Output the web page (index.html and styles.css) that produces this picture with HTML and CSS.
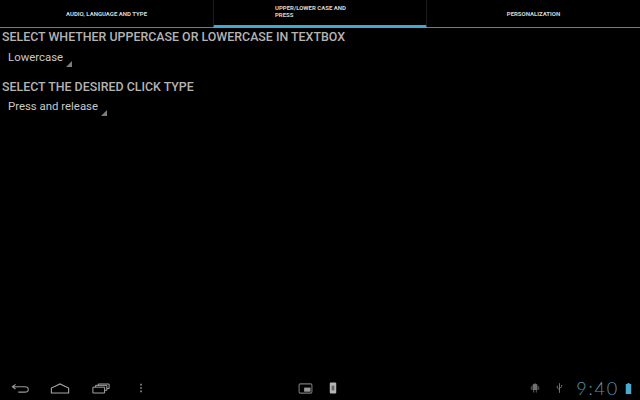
FILE: index.html
```html
<!DOCTYPE html>
<html>
<head>
<meta charset="utf-8">
<title>Settings</title>
<link rel="stylesheet" href="styles.css">
</head>
<body>
<div class="screen">
  <nav class="tabs">
    <div class="tab"><span class="tab-label">AUDIO, LANGUAGE AND TYPE</span></div>
    <div class="tab tab-active"><span class="tab-label tab-label-wrap">UPPER/LOWER CASE AND PRESS</span></div>
    <div class="tab"><span class="tab-label">PERSONALIZATION</span></div>
  </nav>
  <main class="content">
    <h2 class="heading">SELECT WHETHER UPPERCASE OR LOWERCASE IN TEXTBOX</h2>
    <div class="spinner spinner-first">Lowercase<span class="corner"></span></div>
    <h2 class="heading heading-second">SELECT THE DESIRED CLICK TYPE</h2>
    <div class="spinner">Press and release<span class="corner"></span></div>
  </main>
  <footer class="sysbar">
    <div class="nav-icons">
      <svg class="ic ic-back" viewBox="0 0 22 12"><path d="M5 1.500 1.500 4 5 6.500M2 4h13c3 0 4 1.500 4 3s-1 3-4 3H8" fill="none" stroke="#9a9a9a" stroke-width="1.200"/></svg>
      <svg class="ic ic-home" viewBox="0 0 22 12"><path d="M1.500 11V5.500L11 1l9.500 4.500V11Z" fill="none" stroke="#a5a5a5" stroke-width="1.200"/></svg>
      <svg class="ic ic-recent" viewBox="0 0 20 12"><path d="M1 4.500h13V11H1ZM4 4.500V2.500h12.500V8H14M7 2.500V1h12v5h-2.500" fill="none" stroke="#a5a5a5" stroke-width="1.100"/></svg>
      <svg class="ic ic-menu" viewBox="0 0 4 12"><path d="M1 1h2v2H1ZM1 5h2v2H1ZM1 9h2v2H1Z" fill="#8c8c8c"/></svg>
    </div>
    <div class="mid-icons">
      <svg class="ic ic-shot" viewBox="0 0 16 12"><rect x="1" y="1" width="14" height="10" rx="1.500" fill="none" stroke="#777" stroke-width="1.200"/><rect x="6.500" y="5" width="7" height="4.500" fill="#999"/></svg>
      <svg class="ic ic-phone" viewBox="0 0 8 13"><rect x="0.500" y="0.500" width="7" height="12" rx="1" fill="#b5b5b5"/><rect x="2.500" y="4" width="3" height="5" fill="#666"/></svg>
    </div>
    <div class="status">
      <svg class="ic ic-android" viewBox="0 0 12 13"><path d="M3 4a3 3 0 0 1 6 0v5H8v3H7V9H5v3H4V9H3ZM1 4.500h1v4H1ZM10 4.500h1v4h-1Z" fill="#6f6f6f"/></svg>
      <svg class="ic ic-usb" viewBox="0 0 8 13"><path d="M4 1v11M1.500 4v2.500L4 8.500M6.500 3v2L4 7" fill="none" stroke="#808080" stroke-width="1"/></svg>
      <span class="clock">9:40</span>
      <svg class="ic ic-batt" viewBox="0 0 7 12"><path d="M2.500 0h2v1H6.500v11H.5V1h2Z" fill="#4fa9cf"/></svg>
    </div>
  </footer>
</div>
</body>
</html>
```
FILE: styles.css
```css
* { box-sizing: border-box; }
html, body { margin: 0; padding: 0; background: #000; }
.screen {
  width: 640px; height: 400px; overflow: hidden;
  display: flex; flex-direction: column;
  background: #000;
  font-family: "Roboto", "Liberation Sans", sans-serif;
}
.tabs {
  flex: none; height: 28px;
  display: grid; grid-template-columns: 213px 214px 213px;
  border-bottom: 1px solid #6f7f86;
}
.tab {
  display: flex; align-items: center; justify-content: center;
  height: 27px; padding-bottom: 1px;
}
.tab-active {
  border-left: 1px solid #1c1c1c; border-right: 1px solid #1c1c1c;
  border-bottom: 3px solid #3fa9cf;
  height: 28px;
  justify-content: flex-start; padding: 0 0 3px 61px;
}
.tab-label {
  font-size: 6px; font-weight: 700; color: #d6d6d6; line-height: 7px;
}
.tab-label-wrap { width: 90px; }
.content { flex: 1; padding: 2px 2px 0; }
.heading {
  margin: 0; font-size: 12.4px; font-weight: 500; line-height: 14px;
  color: #b4b4b4; white-space: nowrap;
}
.heading-second { margin-top: 16px; }
.spinner {
  position: relative; display: block; width: fit-content;
  margin: 5px 0 0 6px;
  padding-right: 9px;
  font-size: 11.4px; line-height: 14px; color: #c8c8c8;
}
.spinner-first { width: 64px; margin-top: 6px; }
.corner {
  position: absolute; right: 0; bottom: -3px;
  width: 0; height: 0;
  border-style: solid; border-width: 0 0 6px 6px;
  border-color: transparent transparent #7d7d7d transparent;
}
.sysbar {
  flex: none; height: 24px;
  display: flex; align-items: center;
}
.ic { display: block; flex: none; }
.nav-icons { display: flex; align-items: center; gap: 20px; padding-left: 11px; width: 298px; }
.ic-back { width: 20px; height: 11px; }
.ic-home { width: 20px; height: 11px; margin-left: -1px; }
.ic-recent { width: 18px; height: 11px; margin-left: 2px; }
.ic-menu { width: 4px; height: 10px; margin-left: 9px; }
.mid-icons { display: flex; align-items: center; gap: 16px; }
.ic-shot { width: 15px; height: 11px; }
.ic-phone { width: 8px; height: 12px; }
.status { margin-left: auto; display: flex; align-items: center; padding-right: 8px; }
.ic-android { width: 10px; height: 12px; margin-right: 16px; }
.ic-usb { width: 7px; height: 12px; margin-right: 13px; }
.clock {
  font-family: "Lato", "Roboto", sans-serif; font-weight: 300;
  font-size: 18px; line-height: 20px; color: #5d93a8; letter-spacing: 1.800px;
  margin-right: 6px;
}
.ic-batt { width: 7px; height: 11px; }
```
